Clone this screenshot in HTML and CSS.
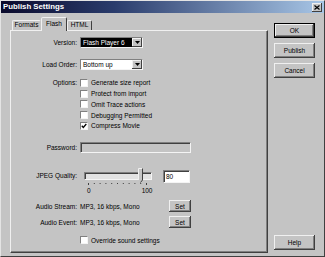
FILE: index.html
```html
<!DOCTYPE html>
<html>
<head>
<meta charset="utf-8">
<link rel="stylesheet" href="styles.css">
</head>
<body>
<div class="window">
  <div class="titlebar">
    <span class="title">Publish Settings</span>
    <span class="close"><svg width="6" height="5" viewBox="0 0 6 5"><path d="M0.5 0.5 L5.5 4.5 M5.5 0.5 L0.5 4.5" stroke="#000" stroke-width="1.2"/></svg></span>
  </div>
  <div class="body">
    <div class="tabarea">
      <div class="tabs">
        <div class="tab t-formats">Formats</div>
        <div class="tab active t-flash">Flash</div>
        <div class="tab t-html">HTML</div>
      </div>
      <div class="panel">
        <div class="row r-version">
          <div class="lbl">Version:</div>
          <div class="select dark"><span class="val">Flash Player 6</span><span class="arrow"><svg width="5" height="3" viewBox="0 0 5 3"><path d="M0 0 H5 L2.5 3 Z" fill="#000"/></svg></span></div>
        </div>
        <div class="row r-load">
          <div class="lbl">Load Order:</div>
          <div class="select"><span class="val">Bottom up</span><span class="arrow"><svg width="5" height="3" viewBox="0 0 5 3"><path d="M0 0 H5 L2.5 3 Z" fill="#000"/></svg></span></div>
        </div>
        <div class="row r-options">
          <div class="lbl opt-lbl">Options:</div>
          <div class="checks">
            <div class="chk"><span class="box"></span>Generate size report</div>
            <div class="chk"><span class="box"></span>Protect from import</div>
            <div class="chk"><span class="box"></span>Omit Trace actions</div>
            <div class="chk"><span class="box"></span>Debugging Permitted</div>
            <div class="chk"><span class="box"><svg width="6" height="6" viewBox="0 0 6 6"><path d="M0.8 2.8 L2.3 4.5 L5.3 1" stroke="#000" stroke-width="1.3" fill="none"/></svg></span>Compress Movie</div>
          </div>
        </div>
        <div class="row r-pass">
          <div class="lbl">Password:</div>
          <div class="field disabled"></div>
        </div>
        <div class="row r-jpeg">
          <div class="lbl jpeg-lbl">JPEG Quality:</div>
          <div class="slider">
            <div class="track"></div>
            <svg class="thumb" width="5" height="15" viewBox="0 0 5 15">
              <path d="M0 0 H5 V12 L2.5 15 L0 12 Z" fill="#c4c4c4"/>
              <path d="M0.5 12 V0.5 H4.5" stroke="#f0f0f0" fill="none"/>
              <path d="M4.5 0.5 V12 L2.5 14.5" stroke="#404040" fill="none"/>
            </svg>
            <svg class="ticks" width="70" height="2" viewBox="0 0 70 2">
              <rect x="4" y="0" width="1" height="2" fill="#404040"/>
              <rect x="9.8" y="0" width="1" height="1" fill="#404040"/>
              <rect x="15.6" y="0" width="1" height="1" fill="#404040"/>
              <rect x="21.4" y="0" width="1" height="1" fill="#404040"/>
              <rect x="27.2" y="0" width="1" height="1" fill="#404040"/>
              <rect x="33" y="0" width="1" height="1" fill="#404040"/>
              <rect x="38.8" y="0" width="1" height="1" fill="#404040"/>
              <rect x="44.6" y="0" width="1" height="1" fill="#404040"/>
              <rect x="50.4" y="0" width="1" height="1" fill="#404040"/>
              <rect x="56.2" y="0" width="1" height="1" fill="#404040"/>
              <rect x="62" y="0" width="1" height="2" fill="#404040"/>
            </svg>
            <div class="scale"><span>0</span><span>100</span></div>
          </div>
          <div class="field num">80</div>
        </div>
        <div class="row r-stream">
          <div class="lbl">Audio Stream:</div>
          <div class="aval">MP3, 16 kbps, Mono</div>
          <button class="btn set">Set</button>
        </div>
        <div class="row r-event">
          <div class="lbl">Audio Event:</div>
          <div class="aval">MP3, 16 kbps, Mono</div>
          <button class="btn set">Set</button>
        </div>
        <div class="row r-override">
          <div class="lbl"></div>
          <div class="chk"><span class="box"></span>Override sound settings</div>
        </div>
      </div>
    </div>
    <div class="buttons">
      <button class="btn main default">OK</button>
      <button class="btn main">Publish</button>
      <button class="btn main">Cancel</button>
      <button class="btn main help">Help</button>
    </div>
  </div>
</div>
</body>
</html>
```

FILE: styles.css
```css
* { box-sizing: border-box; }
html, body { margin: 0; padding: 0; }
body {
  font-family: "Liberation Sans", Arial, sans-serif;
  font-size: 6.5px;
  color: #000;
  background: #c4c4c4;
}
.window {
  width: 325px;
  height: 257px;
  border: 1px solid;
  border-color: #e4e4e4 #404040 #404040 #e4e4e4;
  background: #c4c4c4;
  display: flex;
  flex-direction: column;
}
.titlebar {
  height: 12px;
  flex-shrink: 0;
  background: linear-gradient(to right, #0a0a2c 0%, #2a3c6c 35%, #a8c6e6 100%);
  display: flex;
  align-items: center;
  justify-content: space-between;
  padding: 0 2px;
}
.title {
  color: #fff;
  font-weight: bold;
  font-size: 7.8px;
  line-height: 10px;
}
.close {
  width: 10px;
  height: 9px;
  background: #c4c4c4;
  box-shadow: inset -1px -1px #404040, inset 1px 1px #f0f0f0;
  display: flex;
  align-items: center;
  justify-content: center;
}
.body {
  flex: 1;
  display: flex;
  padding: 4px 0 3px 9px;
}
.tabarea {
  width: 258px;
  display: flex;
  flex-direction: column;
}
.tabs {
  height: 13px;
  display: flex;
  align-items: flex-end;
  padding-left: 2px;
}
.tab {
  height: 10px;
  border: 1px solid;
  border-bottom: none;
  border-color: #f0f0f0 #404040 transparent #f0f0f0;
  border-radius: 2px 2px 0 0;
  text-align: center;
  line-height: 7px;
  padding-top: 0;
}
.t-formats { width: 29px; border-right-color: transparent; }
.t-flash { width: 26px; }
.t-html { width: 25px; }
.tab.active {
  height: 14px;
  margin-bottom: -1px;
  background: #c4c4c4;
  position: relative;
  z-index: 1;
  line-height: 10px;
  padding-top: 1px;
}
.panel {
  height: 223px;
  border: 1px solid;
  border-color: #f0f0f0 #404040 #404040 #f0f0f0;
  box-shadow: inset -1px -1px #808080;
  display: flex;
  flex-direction: column;
}
.row {
  display: flex;
  align-items: center;
  flex-shrink: 0;
}
.lbl {
  width: 66px;
  margin-right: 3px;
  text-align: right;
  flex-shrink: 0;
}
.r-version { margin-top: 6px; height: 11px; }
.r-load { margin-top: 11px; height: 11px; }
.select {
  width: 63px;
  height: 11px;
  display: flex;
  background: #fff;
  border: 1px solid;
  border-color: #808080 #f4f4f4 #f4f4f4 #808080;
}
.select .val {
  flex: 1;
  padding-left: 2px;
  line-height: 9px;
  white-space: nowrap;
}
.select.dark { background: #000; }
.select.dark .val { color: #fff; }
.arrow {
  width: 10px;
  height: 9px;
  background: #c4c4c4;
  box-shadow: inset -1px -1px #404040, inset 1px 1px #f0f0f0;
  display: flex;
  align-items: center;
  justify-content: center;
}
.r-options { margin-top: 7.5px; align-items: flex-start; }
.opt-lbl { line-height: 10.75px; }
.checks { display: flex; flex-direction: column; }
.chk {
  height: 10.75px;
  display: flex;
  align-items: center;
  white-space: nowrap;
}
.box {
  width: 8px;
  height: 8px;
  margin-right: 3px;
  background: #fff;
  border: 1px solid;
  border-color: #808080 #f4f4f4 #f4f4f4 #808080;
  display: flex;
  align-items: center;
  justify-content: center;
  flex-shrink: 0;
}
.r-pass { margin-top: 10.75px; height: 11px; }
.field {
  border: 1px solid;
  border-color: #808080 #f4f4f4 #f4f4f4 #808080;
  box-shadow: inset 1px 1px #404040;
}
.field.disabled {
  width: 111px;
  height: 11px;
  background: #c4c4c4;
}
.r-jpeg { margin-top: 14px; height: 28px; align-items: flex-start; }
.jpeg-lbl { margin-top: 5px; line-height: 8px; }
.slider {
  width: 70px;
  height: 28px;
  margin-left: 4px;
  position: relative;
  display: flex;
  flex-direction: column;
}
.track {
  width: 68px;
  height: 8px;
  margin-top: 5px;
  background: #e2e2e2;
  border: 1px solid;
  border-color: #808080 #f4f4f4 #f4f4f4 #808080;
  box-shadow: inset 1px 1px #404040;
}
.thumb {
  position: absolute;
  left: 54px;
  top: 1px;
}
.ticks { margin-top: 3px; display: block; }
.scale {
  margin-top: 2px;
  line-height: 7px;
  display: flex;
  justify-content: space-between;
  padding: 0 1.5px 0 3px;
}
.field.num {
  width: 27px;
  height: 13px;
  margin-left: 9px;
  margin-top: 3px;
  background: #fff;
  padding-left: 2px;
  line-height: 11px;
}
.r-stream { margin-top: 5px; height: 12px; }
.r-event { margin-top: 4px; height: 12px; }
.aval { width: 89px; white-space: nowrap; }
.r-override { margin-top: 7px; height: 10px; }
.btn {
  font-family: "Liberation Sans", Arial, sans-serif;
  font-size: 6.5px;
  color: #000;
  background: #c4c4c4;
  border: none;
  padding: 0;
  margin: 0;
  box-shadow: inset -1px -1px #404040, inset 1px 1px #f0f0f0, inset -2px -2px #808080;
}
.btn.set { width: 22px; height: 12px; }
.buttons {
  width: 41px;
  margin-left: 6px;
  margin-top: 6px;
  display: flex;
  flex-direction: column;
}
.btn.main { width: 41px; height: 15px; margin-bottom: 5px; }
.btn.default { border: 1px solid #000; }
.btn.help { margin-top: auto; margin-bottom: 3px; }
```
